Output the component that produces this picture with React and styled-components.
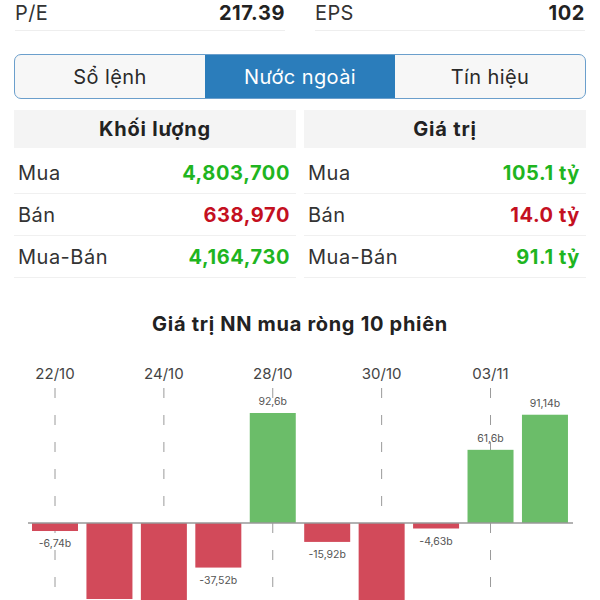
import React from "react";
import styled, { createGlobalStyle } from "styled-components";

const GlobalStyle = createGlobalStyle`
  html, body {
    margin: 0;
    padding: 0;
    background: #ffffff;
  }
  body {
    font-family: "Inter", "Noto Sans", sans-serif;
    color: #222;
  }
`;

const Page = styled.div`
  width: 600px;
  height: 600px;
  overflow: hidden;
  background: #fff;
`;

const StatRow = styled.div`
  display: grid;
  grid-template-columns: 1fr 1fr;
  gap: 30px;
  padding: 0 15px;
`;

const Stat = styled.div`
  display: flex;
  justify-content: space-between;
  align-items: center;
  height: 31px;
  padding-bottom: 4px;
  box-sizing: border-box;
  border-bottom: 1px solid #eeeeee;
  font-size: 20px;
  letter-spacing: 0.4px;
`;

const StatLabel = styled.span`
  color: #333;
`;

const StatValue = styled.span`
  font-weight: 700;
  color: #222;
  letter-spacing: 0.6px;
`;

const Tabs = styled.div`
  display: grid;
  grid-template-columns: 1fr 1fr 1fr;
  margin: 23px 14px 0;
  height: 45px;
  box-sizing: border-box;
  border: 1.5px solid #6b9fcc;
  border-radius: 7px;
  overflow: hidden;
  background: #f7f7f7;
`;

const Tab = styled.div`
  display: flex;
  align-items: center;
  justify-content: center;
  font-size: 20px;
  letter-spacing: 0.4px;
  color: ${(p) => (p.$active ? "#ffffff" : "#2a2a2a")};
  background: ${(p) => (p.$active ? "#2b7dbb" : "transparent")};
`;

const Table = styled.div`
  display: grid;
  grid-template-columns: 1fr 1fr;
  gap: 8px;
  margin: 11px 14px 0;
`;

const Column = styled.div`
  display: flex;
  flex-direction: column;
`;

const HeaderCell = styled.div`
  height: 38px;
  display: flex;
  align-items: center;
  justify-content: center;
  background: #f4f4f4;
  font-size: 20px;
  font-weight: 700;
  letter-spacing: 0.8px;
  color: #222;
  margin-bottom: 4px;
`;

const Row = styled.div`
  display: flex;
  align-items: center;
  justify-content: space-between;
  height: 42px;
  padding: 0 6px 0 4px;
  box-sizing: border-box;
  border-bottom: 1px solid #f0f0f0;
  font-size: 20px;
`;

const RowLabel = styled.span`
  color: #333;
  letter-spacing: 0.5px;
`;

const RowValue = styled.span`
  font-weight: 700;
  letter-spacing: 0.6px;
  color: ${(p) => (p.$tone === "down" ? "#c4101f" : "#1fb51f")};
`;

const ChartTitle = styled.div`
  margin-top: 34px;
  text-align: center;
  font-size: 20px;
  font-weight: 700;
  letter-spacing: 0.7px;
  color: #222;
`;

const ChartSvg = styled.svg`
  display: block;
  margin-top: 10px;
`;

const volume = [
  { label: "Mua", value: "4,803,700", tone: "up" },
  { label: "Bán", value: "638,970", tone: "down" },
  { label: "Mua-Bán", value: "4,164,730", tone: "up" },
];

const amount = [
  { label: "Mua", value: "105.1 tỷ", tone: "up" },
  { label: "Bán", value: "14.0 tỷ", tone: "down" },
  { label: "Mua-Bán", value: "91.1 tỷ", tone: "up" },
];

// bars 2, 3 and 7 run past the bottom edge, so their labels are not drawn
const sessions = [
  { date: "22/10", v: -6.74, text: "-6,74b" },
  { date: "23/10", v: -64 },
  { date: "24/10", v: -92 },
  { date: "25/10", v: -37.52, text: "-37,52b" },
  { date: "28/10", v: 92.6, text: "92,6b" },
  { date: "29/10", v: -15.92, text: "-15,92b" },
  { date: "30/10", v: -88 },
  { date: "31/10", v: -4.63, text: "-4,63b" },
  { date: "03/11", v: 61.6, text: "61,6b" },
  { date: "04/11", v: 91.14, text: "91,14b" },
];

const TOP = 345;
const BASE = 522;
const SCALE = 1.188;
const PITCH = 54.44;

const Chart = () => {
  const cx = (i) => 55 + PITCH * i;
  return (
    <ChartSvg width="600" height="255" viewBox={`0 ${TOP} 600 255`}>
      {sessions.map((s, i) =>
        i % 2 === 0 ? (
          <g key={"g" + i}>
            <text
              x={cx(i)}
              y={378}
              textAnchor="middle"
              fontSize="15"
              fill="#444"
              fontFamily="Inter, sans-serif"
            >
              {s.date}
            </text>
            <line
              x1={cx(i)}
              x2={cx(i)}
              y1={387}
              y2={600}
              stroke="#9a9a9a"
              strokeWidth="1"
              strokeDasharray="10 17"
            />
          </g>
        ) : null
      )}
      {sessions.map((s, i) => {
        const h = Math.abs(s.v) * SCALE;
        const up = s.v >= 0;
        const y = up ? BASE - h : BASE;
        return (
          <g key={"b" + i}>
            <rect
              x={cx(i) - 23}
              y={y}
              width="46"
              height={h}
              fill={up ? "#6bbd69" : "#d24a5a"}
            />
            {s.text && (
              <text
                x={cx(i)}
                y={up ? y - 8 : BASE + h + 16}
                textAnchor="middle"
                fontSize="10.5"
                fill="#555"
                fontFamily="Inter, sans-serif"
              >
                {s.text}
              </text>
            )}
          </g>
        );
      })}
      <line x1="28" x2="573" y1={BASE} y2={BASE} stroke="#999" strokeWidth="1.5" />
    </ChartSvg>
  );
};

const App = () => {
  return (
    <Page>
      <GlobalStyle />
      <StatRow>
        <Stat>
          <StatLabel>P/E</StatLabel>
          <StatValue>217.39</StatValue>
        </Stat>
        <Stat>
          <StatLabel>EPS</StatLabel>
          <StatValue>102</StatValue>
        </Stat>
      </StatRow>
      <Tabs>
        <Tab>Sổ lệnh</Tab>
        <Tab $active>Nước ngoài</Tab>
        <Tab>Tín hiệu</Tab>
      </Tabs>
      <Table>
        <Column>
          <HeaderCell>Khối lượng</HeaderCell>
          {volume.map((r) => (
            <Row key={r.label}>
              <RowLabel>{r.label}</RowLabel>
              <RowValue $tone={r.tone}>{r.value}</RowValue>
            </Row>
          ))}
        </Column>
        <Column>
          <HeaderCell>Giá trị</HeaderCell>
          {amount.map((r) => (
            <Row key={r.label}>
              <RowLabel>{r.label}</RowLabel>
              <RowValue $tone={r.tone}>{r.value}</RowValue>
            </Row>
          ))}
        </Column>
      </Table>
      <ChartTitle>Giá trị NN mua ròng 10 phiên</ChartTitle>
      <Chart />
    </Page>
  );
};

export default App;
